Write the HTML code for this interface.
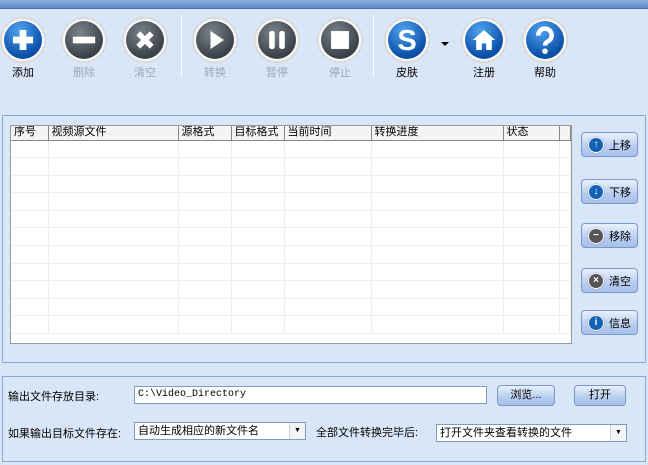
<!DOCTYPE html><html><head><meta charset="utf-8"><style>
*{margin:0;padding:0;box-sizing:border-box}
body{width:648px;height:465px;background:#d9e6f8;font-family:"Liberation Sans","Noto Sans CJK SC",sans-serif;font-size:11px;position:relative;overflow:hidden;color:#000}
.a{position:absolute}
.top{left:0;top:0;width:648px;height:9px;background:linear-gradient(#89aee0,#5f87c4);border-bottom:1px solid #4d73b0}
.ic{position:absolute;top:17px;width:46px;height:46px;border-radius:50%;background:radial-gradient(circle at 50% 50%,#fff 60%,#bbb 75%,#888 100%);}
.ic i{position:absolute;left:4px;top:4px;width:38px;height:38px;border-radius:50%;background:radial-gradient(circle at 40% 30%,#7a828c,#3b4148 70%)}
.ic.b i{background:radial-gradient(circle at 40% 25%,#4fa3ef,#0b4fa8 70%)}
.ic svg{position:absolute;left:4px;top:4px;width:38px;height:38px}
.lb{position:absolute;width:60px;text-align:center;font-size:11px;top:64px}
.g{color:#a0a8b4}
.sep{position:absolute;top:15px;width:1px;height:63px;background:#8a96a8;border-right:1px solid #fff}
.pn{border:1px solid #8aa8d6}
table{border-collapse:collapse;background:#fff;width:100%;table-layout:fixed}
td{border-right:1px solid #eee;border-bottom:1px solid #eee;height:17.6px}
th{font-weight:normal;text-align:left;padding-left:3px;height:14px;border-right:1px solid #888;border-bottom:1px solid #888;background:#f4f4f4;font-size:11px;line-height:13px}
.bt{position:absolute;left:581px;width:57px;height:25px;border:1px solid #7a97c8;border-radius:4px;background:linear-gradient(#eaf1fc,#b7cdf0 60%,#a7c0ea);font-size:11px}
.bt b{position:absolute;left:6px;top:4px;width:16px;height:16px;border-radius:50%;background:#1462b5;border:1px solid #fff;box-shadow:0 0 1px #555;color:#fff;font-size:10px;line-height:14px;text-align:center}
.bt span{position:absolute;left:27px;top:4px}
.pb{position:absolute;border:1px solid #7a97c8;border-radius:4px;background:linear-gradient(#eaf1fc,#b7cdf0 60%,#a7c0ea);text-align:center;line-height:19px}
.in{position:absolute;background:#fff;border:1px solid #7f9db9;height:18px;line-height:16px;padding-left:3px;font-size:11px}
.dd{position:absolute;right:0;top:0;width:16px;height:16px;border-left:1px solid #ccc;background:#f4f4f4;font-size:7px;text-align:center;line-height:16px}
</style></head><body>
<div class="a top"></div>
<div class="ic b" style="left:0px"><i></i><svg viewBox="0 0 34 34"><path d="M17 8v18M8 17h18" stroke="#fff" stroke-width="6"/></svg></div>
<div class="ic" style="left:61px"><i></i><svg viewBox="0 0 34 34"><rect x="7" y="14" width="20" height="6" fill="#fff"/></svg></div>
<div class="ic" style="left:122px"><i></i><svg viewBox="0 0 34 34"><path d="M11 11l12 12M23 11L11 23" stroke="#fff" stroke-width="5"/></svg></div>
<div class="sep" style="left:181px"></div>
<div class="ic" style="left:192px"><i></i><svg viewBox="0 0 34 34"><path d="M13 9l12 8-12 8z" fill="#fff"/></svg></div>
<div class="ic" style="left:254px"><i></i><svg viewBox="0 0 34 34"><rect x="10" y="9" width="5" height="16" rx="2" fill="#fff"/><rect x="19" y="9" width="5" height="16" rx="2" fill="#fff"/></svg></div>
<div class="ic" style="left:317px"><i></i><svg viewBox="0 0 34 34"><rect x="9" y="9" width="16" height="16" fill="#fff"/></svg></div>
<div class="sep" style="left:373px"></div>
<div class="ic b" style="left:384px"><i></i><svg viewBox="0 0 34 34"><text x="17" y="26" text-anchor="middle" font-family="Liberation Sans" font-weight="bold" font-size="26" fill="#fff">S</text></svg></div>
<div class="a" style="left:441px;top:42px;border:4px solid transparent;border-top:4px solid #000"></div>
<div class="ic b" style="left:461px"><i></i><svg viewBox="0 0 34 34"><path d="M7 17L17 8l10 9h-3v9h-5v-6h-4v6h-5v-9z" fill="#fff"/></svg></div>
<div class="ic b" style="left:522px"><i></i><svg viewBox="0 0 34 34"><path d="M11 13a6 6 0 1 1 9 5c-2 1-3 2-3 4" stroke="#fff" stroke-width="4" fill="none"/><circle cx="17" cy="27" r="2.5" fill="#fff"/></svg></div>
<div class="lb" style="left:-7px">添加</div><div class="lb g" style="left:54px">删除</div><div class="lb g" style="left:115px">清空</div><div class="lb g" style="left:185px">转换</div><div class="lb g" style="left:247px">暂停</div><div class="lb g" style="left:310px">停止</div><div class="lb" style="left:377px">皮肤</div><div class="lb" style="left:454px">注册</div><div class="lb" style="left:515px">帮助</div>
<div class="a pn" style="left:2px;top:115px;width:644px;height:248px"></div>
<div class="a" style="left:10px;top:125px;width:562px;height:219px;border:1px solid #999;background:#fff;overflow:hidden">
<table><colgroup><col style="width:37px"><col style="width:130px"><col style="width:53px"><col style="width:53px"><col style="width:87px"><col style="width:132px"><col style="width:56px"><col></colgroup>
<tr><th>序号</th><th>视频源文件</th><th>源格式</th><th>目标格式</th><th>当前时间</th><th>转换进度</th><th>状态</th><th></th></tr>
<tr><td></td><td></td><td></td><td></td><td></td><td></td><td></td><td></td></tr><tr><td></td><td></td><td></td><td></td><td></td><td></td><td></td><td></td></tr><tr><td></td><td></td><td></td><td></td><td></td><td></td><td></td><td></td></tr><tr><td></td><td></td><td></td><td></td><td></td><td></td><td></td><td></td></tr><tr><td></td><td></td><td></td><td></td><td></td><td></td><td></td><td></td></tr><tr><td></td><td></td><td></td><td></td><td></td><td></td><td></td><td></td></tr><tr><td></td><td></td><td></td><td></td><td></td><td></td><td></td><td></td></tr><tr><td></td><td></td><td></td><td></td><td></td><td></td><td></td><td></td></tr><tr><td></td><td></td><td></td><td></td><td></td><td></td><td></td><td></td></tr><tr><td></td><td></td><td></td><td></td><td></td><td></td><td></td><td></td></tr><tr><td></td><td></td><td></td><td></td><td></td><td></td><td></td><td></td></tr>
</table></div>
<div class="bt" style="top:132px"><b>↑</b><span>上移</span></div>
<div class="bt" style="top:179px"><b>↓</b><span>下移</span></div>
<div class="bt" style="top:223px"><b style="background:#555">−</b><span>移除</span></div>
<div class="bt" style="top:268px"><b style="background:#555">×</b><span>清空</span></div>
<div class="bt" style="top:310px"><b style="font-weight:bold">i</b><span>信息</span></div>
<div class="a pn" style="left:2px;top:376px;width:644px;height:86px"></div>
<div class="a" style="left:8px;top:388px">输出文件存放目录:</div>
<div class="in" style="left:134px;top:386px;width:353px;font-family:'Liberation Mono',monospace;font-size:10px">C:\Video_Directory</div>
<div class="pb" style="left:497px;top:385px;width:58px;height:21px">浏览...</div>
<div class="pb" style="left:574px;top:385px;width:52px;height:21px">打开</div>
<div class="a" style="left:8px;top:425px">如果输出目标文件存在:</div>
<div class="in" style="left:134px;top:422px;width:172px">自动生成相应的新文件名<div class="dd">▼</div></div>
<div class="a" style="left:316px;top:424px">全部文件转换完毕后:</div>
<div class="in" style="left:436px;top:424px;width:191px">打开文件夹查看转换的文件<div class="dd">▼</div></div>
</body></html>
